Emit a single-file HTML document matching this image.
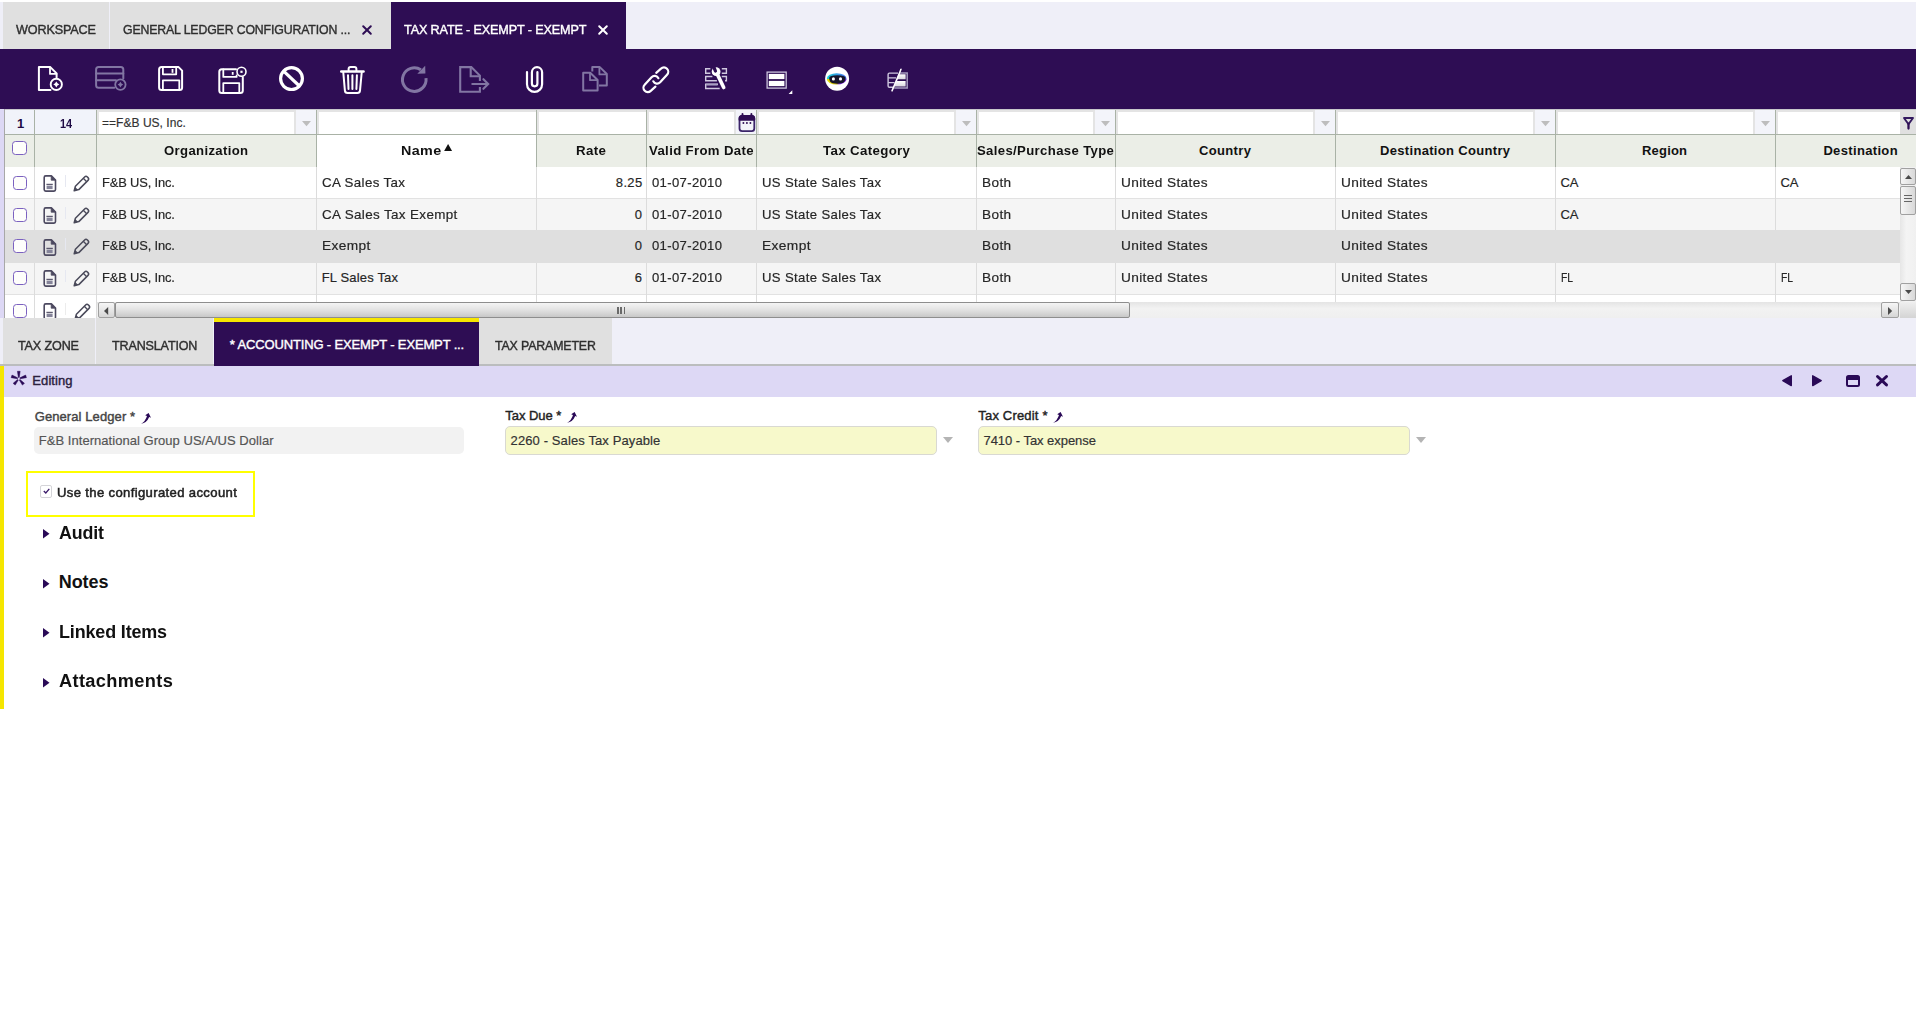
<!DOCTYPE html>
<html><head><meta charset="utf-8"><title>Tax Rate - Exempt - Exempt</title>
<style>
html,body{margin:0;padding:0;background:#fff;}
body{width:1919px;height:1027px;position:relative;overflow:hidden;font-family:"Liberation Sans",sans-serif;}
.r{position:absolute;box-sizing:border-box;}
.t{position:absolute;white-space:pre;line-height:1;transform-origin:0 50%;}
svg{position:absolute;overflow:visible;}
</style></head><body>
<div class="r" style="left:0px;top:2px;width:1916px;height:47px;background:#efeff8;"></div>
<div class="r" style="left:3px;top:2px;width:106px;height:47px;background:#e0e0e0;"></div>
<div class="r" style="left:110px;top:2px;width:281px;height:47px;background:#e0e0e0;"></div>
<div class="r" style="left:391px;top:2px;width:235px;height:48px;background:#2e0d54;"></div>
<span class="t" style="left:16.00px;top:23.00px;font-size:13px;-webkit-text-stroke:0.40px #2f2f2f;color:#2f2f2f;letter-spacing:-0.150px;transform:scaleX(0.9715);">WORKSPACE</span>
<span class="t" style="left:123.40px;top:23.00px;font-size:13px;-webkit-text-stroke:0.40px #2f2f2f;color:#2f2f2f;letter-spacing:-0.150px;transform:scaleX(0.9466);">GENERAL LEDGER CONFIGURATION ...</span>
<span class="t" style="left:404.20px;top:23.00px;font-size:13px;-webkit-text-stroke:0.40px #ffffff;color:#ffffff;letter-spacing:-0.150px;transform:scaleX(0.9719);">TAX RATE - EXEMPT - EXEMPT</span>
<svg style="left:362.3px;top:24.7px" width="10" height="10" viewBox="0 0 10 10"><path d="M1.2 1.2 L8.8 8.8 M8.8 1.2 L1.2 8.8" stroke="#2e0d54" stroke-width="2" stroke-linecap="round" fill="none"/></svg>
<svg style="left:598.2px;top:24.7px" width="10" height="10" viewBox="0 0 10 10"><path d="M1.2 1.2 L8.8 8.8 M8.8 1.2 L1.2 8.8" stroke="#ffffff" stroke-width="2" stroke-linecap="round" fill="none"/></svg>
<div class="r" style="left:0px;top:49px;width:1916px;height:60px;background:#2e0d54;"></div>
<div class="r" style="left:0px;top:109px;width:1916px;height:1px;background:#c8c8cc;"></div>
<svg style="left:0;top:48px" width="1916" height="61" viewBox="0 48 1916 61"><g stroke="#ffffff" stroke-width="2" fill="none" stroke-linejoin="round" stroke-linecap="round"><path d="M50.5 90.1H38.9V67.1H50.3L56.6 73.4V77.6"/><path d="M50 67.3V73.9H56.4" stroke-width="1.8"/><circle cx="56.3" cy="84.4" r="5.6" stroke-width="1.9"/></g><path d="M56.3 81.4L57.5 83.2L59.3 84.4L57.5 85.6L56.3 87.4L55.1 85.6L53.3 84.4L55.1 83.2Z" fill="#ffffff"/><g stroke="#8276a3" stroke-width="2" fill="none" stroke-linejoin="round" stroke-linecap="round"><path d="M114.2 87.7H98.6Q96.1 87.7 96.1 85.2V69.6Q96.1 67.1 98.6 67.1H120.8Q123.3 67.1 123.3 69.6V78.6"/><path d="M96.1 73.6H123.3M96.1 80.2H116"/><circle cx="120.4" cy="84.6" r="5.2" stroke-width="1.8"/></g><path d="M120.4 81.8L121.5 83.5L123.2 84.6L121.5 85.7L120.4 87.4L119.3 85.7L117.6 84.6L119.3 83.5Z" fill="#8276a3"/><g stroke="#ffffff" stroke-width="2" fill="none" stroke-linejoin="round" stroke-linecap="round"><path d="M161.6 67.1H178.6L182.1 70.6V87.6Q182.1 90.1 179.6 90.1H161.6Q159.1 90.1 159.1 87.6V69.6Q159.1 67.1 161.6 67.1Z"/><path d="M162.9 67.3V74.3H176.2V67.3" stroke-width="1.8"/><path d="M162.9 90V80.3H179.3V90" stroke-width="1.8"/></g><rect x="171.6" y="69" width="1.8" height="3.8" fill="#ffffff"/><g stroke="#ffffff" stroke-width="2" fill="none" stroke-linejoin="round" stroke-linecap="round"><path d="M236 69.2H221.8Q219.3 69.2 219.3 71.7V90.5Q219.3 93 221.8 93H240.3Q242.8 93 242.8 90.5V77.2"/><path d="M223.3 69.4V76.9H236.6V75.5" stroke-width="1.8"/><path d="M223.3 92.8V83.1H239.3V92.8" stroke-width="1.8"/><circle cx="241.5" cy="71.8" r="4.5" stroke-width="1.6"/></g><rect x="231.8" y="72" width="1.8" height="2.8" fill="#ffffff"/><rect x="240.4" y="70.7" width="2.2" height="2.2" fill="#ffffff"/><g stroke="#ffffff" stroke-width="3.2" fill="none"><circle cx="291.5" cy="78.6" r="10.9"/><path d="M283.6 71.2L299.4 86"/></g><g stroke="#ffffff" fill="none" stroke-linejoin="round" stroke-linecap="round"><path d="M341.2 71.5H363.6" stroke-width="2.4"/><path d="M348.6 70.6V69.1Q348.6 67.1 350.6 67.1H354.4Q356.4 67.1 356.4 69.1V70.6" stroke-width="2"/><path d="M343.3 72.5L344.9 90.6Q345.1 93 347.5 93H357.4Q359.8 93 360 90.6L361.7 72.5" stroke-width="2"/><path d="M348 75.3L348.5 89M352.4 75.3V89M356.9 75.3L356.4 89" stroke-width="2"/></g><g stroke="#8276a3" stroke-width="3" fill="none"><path d="M420.9 69.8A11.8 11.8 0 1 0 426 78.2"/></g><path d="M425.2 65.8L425.4 73.6L417.3 73.8Z" fill="#8276a3"/><g stroke="#8276a3" stroke-width="2.1" fill="none" stroke-linejoin="miter"><path d="M479.9 81V75.6L471.3 67.1H460.2V91.8H479.9V87"/><path d="M470.7 67.3V76.2H479.7"/><path d="M472.3 84H487.6M483.4 79.2L488.2 84L483.4 88.8" stroke-linecap="round"/></g><path d="M527 72V84.3A7.55 7.55 0 0 0 542.1 84.3V72.3A5.1 5.1 0 0 0 531.9 72.3V83.6A2.75 2.75 0 0 0 537.4 83.6V72.2" stroke="#ffffff" stroke-width="2.2" fill="none" stroke-linecap="round"/><g stroke="#8276a3" stroke-width="2" fill="none" stroke-linejoin="round"><path d="M592.3 71.6V67.1H599.8L606.8 74V85.4H599"/><path d="M599.4 67.3V74.4H606.6" stroke-width="1.8"/><path d="M583.2 72.8H590.2L597.6 80V90.6H583.2Z"/><path d="M590 73V80.2H597.4" stroke-width="1.8"/></g><g stroke="#ffffff" stroke-width="2.2" fill="none" stroke-linecap="round" stroke-linejoin="round"><path d="M656.25 72.85L660.96 68.66A4.3 4.3 0 0 1 667.04 74.74L660.14 82.34A4.3 4.3 0 0 1 653.3 81.3"/><path d="M656.25 72.85L660.96 68.66A4.3 4.3 0 0 1 667.04 74.74L660.14 82.34A4.3 4.3 0 0 1 653.3 81.3" transform="rotate(180 655.85 79.75)"/></g><g stroke="#cfc8df" stroke-width="1.4" fill="none"><path d="M710.4 68.8H705.7V73.2H710.4M721.8 68.8H726.4V73.2H721.8"/><path d="M712.4 76.5H705.7V80.8H716.9M721.8 76.5H726.4V80.8H725"/><path d="M718 84.3H705.7V88.5H719.7"/><path d="M706 84.6H717.6" stroke-width="1.9" stroke="#a89fc2"/></g><path d="M717.4 74.4L723.7 87.5" stroke="#ffffff" stroke-width="3.6" stroke-linecap="round"/><circle cx="716.1" cy="71.7" r="4.4" fill="#ffffff"/><path d="M715.4 71L713.2 65.4" stroke="#2e0d54" stroke-width="3.3" stroke-linecap="round"/><rect x="767.1" y="72.1" width="19.1" height="16" fill="none" stroke="#cbc3dc" stroke-width="1.3"/><rect x="768.8" y="73.9" width="15.6" height="5.2" fill="#ffffff"/><rect x="768.8" y="80.9" width="15.6" height="5.2" fill="#ffffff"/><path d="M788.6 94H792.3V90.3Z" fill="#ffffff"/><defs><linearGradient id="rg1" x1="0" y1="0" x2="1" y2="0"><stop offset="0" stop-color="#19d3d6"/><stop offset="1" stop-color="#4b6ff0"/></linearGradient><linearGradient id="rg2" x1="0" y1="0" x2="1" y2="0"><stop offset="0" stop-color="#e9e100"/><stop offset="0.5" stop-color="#c8b400"/><stop offset="0.62" stop-color="#7a22d8"/><stop offset="1" stop-color="#7a22d8"/></linearGradient><filter id="rbl" x="-20%" y="-20%" width="140%" height="140%"><feGaussianBlur stdDeviation="0.45"/></filter><clipPath id="rtop"><rect x="825" y="66" width="24" height="12.9"/></clipPath><clipPath id="rbot"><rect x="825" y="78.9" width="24" height="13"/></clipPath></defs><circle cx="837.1" cy="78.8" r="12" fill="#ffffff"/><g filter="url(#rbl)"><ellipse cx="836.7" cy="78.9" rx="9.9" ry="5.7" fill="url(#rg1)" clip-path="url(#rtop)"/><ellipse cx="836.7" cy="78.9" rx="9.9" ry="5.7" fill="url(#rg2)" clip-path="url(#rbot)"/></g><path d="M829.2 77.8Q829.4 75.2 837.3 75.2Q845.3 75.2 845.5 77.8Q845.7 82 841.6 83.3Q837.4 84.2 833 83.3Q829 82 829.2 77.8Z" fill="#17162a"/><circle cx="833.4" cy="78.9" r="1.55" fill="#ffffff"/><circle cx="840.5" cy="78.9" r="1.55" fill="#ffffff"/><defs><linearGradient id="gg" x1="0" y1="0" x2="0" y2="1"><stop offset="0" stop-color="#ffffff"/><stop offset="1" stop-color="#d8d6de"/></linearGradient></defs><path d="M898 73.1H889.4Q888.1 73.1 888.1 74.4V86Q888.1 87.3 889.4 87.3H893.5" stroke="#cfc8df" stroke-width="1.4" fill="none"/><path d="M888.1 77.9H896M888.1 82.6H894.5" stroke="#cfc8df" stroke-width="1.4"/><path d="M899.8 73.1H907.2V88H894.2" stroke="#a59bbf" stroke-width="1.5" fill="none"/><path d="M899 74.2H905.6V79.3H897Z" fill="url(#gg)"/><path d="M896.6 81H905.6V86.6H894.2Z" fill="url(#gg)"/><path d="M901 69.2L892 90.9L896.5 80.5Z" stroke="#ffffff" stroke-width="1.5" fill="#ffffff" stroke-linejoin="round"/></svg>
<div class="r" style="left:0px;top:109px;width:4px;height:209px;background:#ddd8f5;"></div>
<div class="r" style="left:4px;top:109px;width:1px;height:209px;background:#a8a8a8;"></div>
<div class="r" style="left:5px;top:110px;width:1911px;height:208px;background:#ffffff;"></div>
<div class="r" style="left:5px;top:110px;width:1911px;height:24px;background:#f1f3fa;"></div>
<div class="r" style="left:5px;top:134px;width:1911px;height:1px;background:#a9b2a6;"></div>
<div class="r" style="left:5px;top:135px;width:1911px;height:32px;background:#ebeee7;"></div>
<div class="r" style="left:317px;top:135px;width:219px;height:32px;background:#ffffff;"></div>
<div class="r" style="left:5px;top:167px;width:1895px;height:31px;background:#ffffff;"></div>
<div class="r" style="left:5px;top:198px;width:1895px;height:1px;background:#e2e2e2;"></div>
<div class="r" style="left:5px;top:199px;width:1895px;height:31px;background:#f5f5f5;"></div>
<div class="r" style="left:5px;top:230px;width:1895px;height:1px;background:#e2e2e2;"></div>
<div class="r" style="left:5px;top:231px;width:1895px;height:31px;background:#dfdfdf;"></div>
<div class="r" style="left:5px;top:262px;width:1895px;height:1px;background:#e2e2e2;"></div>
<div class="r" style="left:5px;top:263px;width:1895px;height:31px;background:#f5f5f5;"></div>
<div class="r" style="left:5px;top:294px;width:1895px;height:1px;background:#e2e2e2;"></div>
<div class="r" style="left:5px;top:295px;width:1895px;height:23px;background:#ffffff;"></div>
<div class="r" style="left:34px;top:110px;width:1px;height:57px;background:#a9b2a6;"></div>
<div class="r" style="left:34px;top:167px;width:1px;height:151px;background:#dcdcdc;"></div>
<div class="r" style="left:96px;top:110px;width:1px;height:57px;background:#a9b2a6;"></div>
<div class="r" style="left:96px;top:167px;width:1px;height:151px;background:#dcdcdc;"></div>
<div class="r" style="left:316px;top:110px;width:1px;height:57px;background:#a9b2a6;"></div>
<div class="r" style="left:316px;top:167px;width:1px;height:151px;background:#dcdcdc;"></div>
<div class="r" style="left:536px;top:110px;width:1px;height:57px;background:#a9b2a6;"></div>
<div class="r" style="left:536px;top:167px;width:1px;height:151px;background:#dcdcdc;"></div>
<div class="r" style="left:646px;top:110px;width:1px;height:57px;background:#a9b2a6;"></div>
<div class="r" style="left:646px;top:167px;width:1px;height:151px;background:#dcdcdc;"></div>
<div class="r" style="left:756px;top:110px;width:1px;height:57px;background:#a9b2a6;"></div>
<div class="r" style="left:756px;top:167px;width:1px;height:151px;background:#dcdcdc;"></div>
<div class="r" style="left:976px;top:110px;width:1px;height:57px;background:#a9b2a6;"></div>
<div class="r" style="left:976px;top:167px;width:1px;height:151px;background:#dcdcdc;"></div>
<div class="r" style="left:1115px;top:110px;width:1px;height:57px;background:#a9b2a6;"></div>
<div class="r" style="left:1115px;top:167px;width:1px;height:151px;background:#dcdcdc;"></div>
<div class="r" style="left:1335px;top:110px;width:1px;height:57px;background:#a9b2a6;"></div>
<div class="r" style="left:1335px;top:167px;width:1px;height:151px;background:#dcdcdc;"></div>
<div class="r" style="left:1555px;top:110px;width:1px;height:57px;background:#a9b2a6;"></div>
<div class="r" style="left:1555px;top:167px;width:1px;height:151px;background:#dcdcdc;"></div>
<div class="r" style="left:1775px;top:110px;width:1px;height:57px;background:#a9b2a6;"></div>
<div class="r" style="left:1775px;top:167px;width:1px;height:151px;background:#dcdcdc;"></div>
<div class="r" style="left:5px;top:230px;width:1895px;height:33px;background:#dfdfdf;"></div>
<div class="r" style="left:97px;top:110px;width:219px;height:24px;background:#e4e4e4;"></div>
<div class="r" style="left:99px;top:112px;width:195px;height:22px;background:#ffffff;"></div>
<div class="r" style="left:296px;top:110px;width:20px;height:24px;background:#f3f4fa;"></div>
<svg style="left:302.3px;top:120.9px" width="9" height="5.2" viewBox="0 0 9 5.2"><path d="M0 0H9L4.5 5.2Z" fill="#bdbdbd"/></svg>
<div class="r" style="left:317px;top:110px;width:219px;height:24px;background:#e4e4e4;"></div>
<div class="r" style="left:319px;top:112px;width:217px;height:22px;background:#ffffff;"></div>
<div class="r" style="left:537px;top:110px;width:109px;height:24px;background:#e4e4e4;"></div>
<div class="r" style="left:539px;top:112px;width:107px;height:22px;background:#ffffff;"></div>
<div class="r" style="left:647px;top:110px;width:109px;height:24px;background:#e4e4e4;"></div>
<div class="r" style="left:649px;top:112px;width:85px;height:22px;background:#ffffff;"></div>
<div class="r" style="left:736px;top:110px;width:20px;height:24px;background:#f3f4fa;"></div>
<div class="r" style="left:757px;top:110px;width:219px;height:24px;background:#e4e4e4;"></div>
<div class="r" style="left:759px;top:112px;width:195px;height:22px;background:#ffffff;"></div>
<div class="r" style="left:956px;top:110px;width:20px;height:24px;background:#f3f4fa;"></div>
<svg style="left:962.3px;top:120.9px" width="9" height="5.2" viewBox="0 0 9 5.2"><path d="M0 0H9L4.5 5.2Z" fill="#bdbdbd"/></svg>
<div class="r" style="left:977px;top:110px;width:138px;height:24px;background:#e4e4e4;"></div>
<div class="r" style="left:979px;top:112px;width:114px;height:22px;background:#ffffff;"></div>
<div class="r" style="left:1095px;top:110px;width:20px;height:24px;background:#f3f4fa;"></div>
<svg style="left:1101.3px;top:120.9px" width="9" height="5.2" viewBox="0 0 9 5.2"><path d="M0 0H9L4.5 5.2Z" fill="#bdbdbd"/></svg>
<div class="r" style="left:1116px;top:110px;width:219px;height:24px;background:#e4e4e4;"></div>
<div class="r" style="left:1118px;top:112px;width:195px;height:22px;background:#ffffff;"></div>
<div class="r" style="left:1315px;top:110px;width:20px;height:24px;background:#f3f4fa;"></div>
<svg style="left:1321.3px;top:120.9px" width="9" height="5.2" viewBox="0 0 9 5.2"><path d="M0 0H9L4.5 5.2Z" fill="#bdbdbd"/></svg>
<div class="r" style="left:1336px;top:110px;width:219px;height:24px;background:#e4e4e4;"></div>
<div class="r" style="left:1338px;top:112px;width:195px;height:22px;background:#ffffff;"></div>
<div class="r" style="left:1535px;top:110px;width:20px;height:24px;background:#f3f4fa;"></div>
<svg style="left:1541.3px;top:120.9px" width="9" height="5.2" viewBox="0 0 9 5.2"><path d="M0 0H9L4.5 5.2Z" fill="#bdbdbd"/></svg>
<div class="r" style="left:1556px;top:110px;width:219px;height:24px;background:#e4e4e4;"></div>
<div class="r" style="left:1558px;top:112px;width:195px;height:22px;background:#ffffff;"></div>
<div class="r" style="left:1755px;top:110px;width:20px;height:24px;background:#f3f4fa;"></div>
<svg style="left:1761.3px;top:120.9px" width="9" height="5.2" viewBox="0 0 9 5.2"><path d="M0 0H9L4.5 5.2Z" fill="#bdbdbd"/></svg>
<div class="r" style="left:1776px;top:110px;width:124px;height:24px;background:#e4e4e4;"></div>
<div class="r" style="left:1778px;top:112px;width:122px;height:22px;background:#ffffff;"></div>
<div class="r" style="left:1900px;top:110px;width:16px;height:24px;background:#e0e0e0;"></div>
<svg style="left:1900px;top:110px" width="16" height="24" viewBox="1900 110 16 24"><path d="M1904 118H1913L1908.5 124.2Z" fill="none" stroke="#33195f" stroke-width="1.9" stroke-linejoin="round"/><path d="M1908.5 124V128.6" stroke="#2e0d54" stroke-width="2.3" stroke-linecap="round"/></svg>
<svg style="left:738px;top:113px" width="18" height="20" viewBox="738 113 18 20"><rect x="739.5" y="115.9" width="14.8" height="15.3" rx="2.6" fill="none" stroke="#3b2469" stroke-width="1.8"/><path d="M739.5 119.8V118.5Q739.5 115.9 742.1 115.9H751.7Q754.3 115.9 754.3 118.5V119.8Z" fill="#2e0d54" stroke="#2e0d54" stroke-width="1.8" stroke-linejoin="round"/><path d="M742.5 113.9V116M751.4 113.9V116" stroke="#2e0d54" stroke-width="1.9" stroke-linecap="round"/><circle cx="743.4" cy="123" r="0.95" fill="#2e0d54"/><circle cx="746.9" cy="123" r="0.95" fill="#2e0d54"/><circle cx="750.4" cy="123" r="0.95" fill="#2e0d54"/></svg>
<span class="t" style="left:17.00px;top:117.00px;font-size:13px;font-weight:bold;color:#1f0b45;letter-spacing:0.000px;">1</span>
<span class="t" style="left:60.40px;top:117.00px;font-size:13px;font-weight:bold;color:#1f0b45;letter-spacing:-0.150px;transform:scaleX(0.8386);">14</span>
<span class="t" style="left:102.00px;top:116.84px;font-size:12px;-webkit-text-stroke:0.18px #333;color:#333;letter-spacing:0.033px;">==F&amp;B US, Inc.</span>
<span class="t" style="left:164.20px;top:144.00px;font-size:13px;font-weight:bold;color:#111;letter-spacing:0.350px;transform:scaleX(1.0096);">Organization</span>
<span class="t" style="left:400.80px;top:144.00px;font-size:13px;font-weight:bold;color:#111;letter-spacing:0.350px;transform:scaleX(1.1027);">Name</span>
<svg style="left:443.8px;top:144.2px" width="8.2" height="7" viewBox="0 0 8 7"><path d="M4 0L8 7H0Z" fill="#111"/></svg>
<span class="t" style="left:576.30px;top:144.00px;font-size:13px;font-weight:bold;color:#111;letter-spacing:0.350px;transform:scaleX(1.0230);">Rate</span>
<span class="t" style="left:649.20px;top:144.00px;font-size:13px;font-weight:bold;color:#111;letter-spacing:0.350px;transform:scaleX(1.0141);">Valid From Date</span>
<span class="t" style="left:823.00px;top:144.00px;font-size:13px;font-weight:bold;color:#111;letter-spacing:0.350px;transform:scaleX(1.0206);">Tax Category</span>
<span class="t" style="left:977.30px;top:144.00px;font-size:13px;font-weight:bold;color:#111;letter-spacing:0.350px;transform:scaleX(1.0110);">Sales/Purchase Type</span>
<span class="t" style="left:1199.00px;top:144.00px;font-size:13px;font-weight:bold;color:#111;letter-spacing:0.350px;">Country</span>
<span class="t" style="left:1380.00px;top:144.00px;font-size:13px;font-weight:bold;color:#111;letter-spacing:0.321px;">Destination Country</span>
<span class="t" style="left:1642.00px;top:144.00px;font-size:13px;font-weight:bold;color:#111;letter-spacing:0.189px;">Region</span>
<span class="t" style="left:1823.40px;top:144.00px;font-size:13px;font-weight:bold;color:#111;letter-spacing:0.342px;">Destination</span>
<div class="r" style="left:12px;top:141px;width:15px;height:14px;background:#fefefb;border:1.3px solid #7b61c0;border-radius:3.5px"></div>
<div class="r" style="left:13px;top:176px;width:14px;height:14px;background:#fefefb;border:1.3px solid #7b61c0;border-radius:3.5px"></div>
<svg style="left:43px;top:175.4px" width="14" height="17" viewBox="0 0 14 17"><path d="M2.7 0.9H8.4L12.5 5V14.6Q12.5 16.1 11 16.1H2.7Q1.2 16.1 1.2 14.6V2.4Q1.2 0.9 2.7 0.9Z" fill="none" stroke="#4c4960" stroke-width="1.6" stroke-linejoin="round"/><path d="M8.2 1V5.2H12.4Z" fill="#4c4960" stroke="#4c4960" stroke-width="0.8"/><rect x="3.4" y="8.8" width="6.4" height="1.1" fill="#4c4960"/><rect x="3.6" y="10.6" width="6" height="3.5" fill="#85849a"/></svg>
<div class="r" style="left:65px;top:175px;width:1px;height:12px;background:#e6e8f1;"></div>
<svg style="left:73.2px;top:175.2px" width="17" height="17" viewBox="0 0 17 17"><path d="M1.2 15.8L2.4 11.2L11.6 2Q13 0.6 14.4 2L15 2.6Q16.4 4 15 5.4L5.8 14.6Z" fill="none" stroke="#4a4a5a" stroke-width="1.5" stroke-linejoin="round"/><path d="M10.3 3.3L13.7 6.7" stroke="#4a4a5a" stroke-width="1.3"/><path d="M1.2 15.8L2.2 12L5 14.8Z" fill="#4a4a5a"/></svg>
<span class="t" style="left:101.60px;top:175.90px;font-size:13px;-webkit-text-stroke:0.18px #262626;color:#262626;letter-spacing:-0.150px;transform:scaleX(0.9921);">F&amp;B US, Inc.</span>
<span class="t" style="left:321.70px;top:175.90px;font-size:13px;-webkit-text-stroke:0.18px #262626;color:#262626;letter-spacing:0.350px;transform:scaleX(1.0256);">CA Sales Tax</span>
<span class="t" style="left:615.80px;top:175.90px;font-size:13px;-webkit-text-stroke:0.18px #262626;color:#262626;letter-spacing:0.350px;">8.25</span>
<span class="t" style="left:651.70px;top:175.90px;font-size:13px;-webkit-text-stroke:0.18px #262626;color:#262626;letter-spacing:0.350px;transform:scaleX(1.0050);">01-07-2010</span>
<span class="t" style="left:761.50px;top:175.90px;font-size:13px;-webkit-text-stroke:0.18px #262626;color:#262626;letter-spacing:0.350px;transform:scaleX(1.0109);">US State Sales Tax</span>
<span class="t" style="left:981.70px;top:175.90px;font-size:13px;-webkit-text-stroke:0.18px #262626;color:#262626;letter-spacing:0.350px;transform:scaleX(1.0470);">Both</span>
<span class="t" style="left:1120.50px;top:175.90px;font-size:13px;-webkit-text-stroke:0.18px #262626;color:#262626;letter-spacing:0.350px;transform:scaleX(1.0517);">United States</span>
<span class="t" style="left:1340.50px;top:175.90px;font-size:13px;-webkit-text-stroke:0.18px #262626;color:#262626;letter-spacing:0.350px;transform:scaleX(1.0517);">United States</span>
<span class="t" style="left:1560.50px;top:175.90px;font-size:13px;-webkit-text-stroke:0.18px #262626;color:#262626;letter-spacing:-0.059px;">CA</span>
<span class="t" style="left:1780.50px;top:175.90px;font-size:13px;-webkit-text-stroke:0.18px #262626;color:#262626;letter-spacing:-0.059px;">CA</span>
<div class="r" style="left:13px;top:207.7px;width:14px;height:14px;background:#fefefb;border:1.3px solid #7b61c0;border-radius:3.5px"></div>
<svg style="left:43px;top:207.1px" width="14" height="17" viewBox="0 0 14 17"><path d="M2.7 0.9H8.4L12.5 5V14.6Q12.5 16.1 11 16.1H2.7Q1.2 16.1 1.2 14.6V2.4Q1.2 0.9 2.7 0.9Z" fill="none" stroke="#4c4960" stroke-width="1.6" stroke-linejoin="round"/><path d="M8.2 1V5.2H12.4Z" fill="#4c4960" stroke="#4c4960" stroke-width="0.8"/><rect x="3.4" y="8.8" width="6.4" height="1.1" fill="#4c4960"/><rect x="3.6" y="10.6" width="6" height="3.5" fill="#85849a"/></svg>
<div class="r" style="left:65px;top:206.7px;width:1px;height:12px;background:#e6e8f1;"></div>
<svg style="left:73.2px;top:206.89999999999998px" width="17" height="17" viewBox="0 0 17 17"><path d="M1.2 15.8L2.4 11.2L11.6 2Q13 0.6 14.4 2L15 2.6Q16.4 4 15 5.4L5.8 14.6Z" fill="none" stroke="#4a4a5a" stroke-width="1.5" stroke-linejoin="round"/><path d="M10.3 3.3L13.7 6.7" stroke="#4a4a5a" stroke-width="1.3"/><path d="M1.2 15.8L2.2 12L5 14.8Z" fill="#4a4a5a"/></svg>
<span class="t" style="left:101.60px;top:207.60px;font-size:13px;-webkit-text-stroke:0.18px #262626;color:#262626;letter-spacing:-0.150px;transform:scaleX(0.9921);">F&amp;B US, Inc.</span>
<span class="t" style="left:321.70px;top:207.60px;font-size:13px;-webkit-text-stroke:0.18px #262626;color:#262626;letter-spacing:0.350px;transform:scaleX(1.0323);">CA Sales Tax Exempt</span>
<span class="t" style="left:634.80px;top:207.60px;font-size:13px;-webkit-text-stroke:0.18px #262626;color:#262626;letter-spacing:0.000px;">0</span>
<span class="t" style="left:651.70px;top:207.60px;font-size:13px;-webkit-text-stroke:0.18px #262626;color:#262626;letter-spacing:0.350px;transform:scaleX(1.0050);">01-07-2010</span>
<span class="t" style="left:761.50px;top:207.60px;font-size:13px;-webkit-text-stroke:0.18px #262626;color:#262626;letter-spacing:0.350px;transform:scaleX(1.0109);">US State Sales Tax</span>
<span class="t" style="left:981.70px;top:207.60px;font-size:13px;-webkit-text-stroke:0.18px #262626;color:#262626;letter-spacing:0.350px;transform:scaleX(1.0470);">Both</span>
<span class="t" style="left:1120.50px;top:207.60px;font-size:13px;-webkit-text-stroke:0.18px #262626;color:#262626;letter-spacing:0.350px;transform:scaleX(1.0517);">United States</span>
<span class="t" style="left:1340.50px;top:207.60px;font-size:13px;-webkit-text-stroke:0.18px #262626;color:#262626;letter-spacing:0.350px;transform:scaleX(1.0517);">United States</span>
<span class="t" style="left:1560.50px;top:207.60px;font-size:13px;-webkit-text-stroke:0.18px #262626;color:#262626;letter-spacing:-0.059px;">CA</span>
<div class="r" style="left:13px;top:239.2px;width:14px;height:14px;background:#fefefb;border:1.3px solid #7b61c0;border-radius:3.5px"></div>
<svg style="left:43px;top:238.6px" width="14" height="17" viewBox="0 0 14 17"><path d="M2.7 0.9H8.4L12.5 5V14.6Q12.5 16.1 11 16.1H2.7Q1.2 16.1 1.2 14.6V2.4Q1.2 0.9 2.7 0.9Z" fill="none" stroke="#4c4960" stroke-width="1.6" stroke-linejoin="round"/><path d="M8.2 1V5.2H12.4Z" fill="#4c4960" stroke="#4c4960" stroke-width="0.8"/><rect x="3.4" y="8.8" width="6.4" height="1.1" fill="#4c4960"/><rect x="3.6" y="10.6" width="6" height="3.5" fill="#85849a"/></svg>
<div class="r" style="left:65px;top:238.2px;width:1px;height:12px;background:#e6e8f1;"></div>
<svg style="left:73.2px;top:238.39999999999998px" width="17" height="17" viewBox="0 0 17 17"><path d="M1.2 15.8L2.4 11.2L11.6 2Q13 0.6 14.4 2L15 2.6Q16.4 4 15 5.4L5.8 14.6Z" fill="none" stroke="#4a4a5a" stroke-width="1.5" stroke-linejoin="round"/><path d="M10.3 3.3L13.7 6.7" stroke="#4a4a5a" stroke-width="1.3"/><path d="M1.2 15.8L2.2 12L5 14.8Z" fill="#4a4a5a"/></svg>
<span class="t" style="left:101.60px;top:239.00px;font-size:13px;-webkit-text-stroke:0.18px #262626;color:#262626;letter-spacing:-0.150px;transform:scaleX(0.9921);">F&amp;B US, Inc.</span>
<span class="t" style="left:321.70px;top:239.00px;font-size:13px;-webkit-text-stroke:0.18px #262626;color:#262626;letter-spacing:0.350px;transform:scaleX(1.0541);">Exempt</span>
<span class="t" style="left:634.80px;top:239.00px;font-size:13px;-webkit-text-stroke:0.18px #262626;color:#262626;letter-spacing:0.000px;">0</span>
<span class="t" style="left:651.70px;top:239.00px;font-size:13px;-webkit-text-stroke:0.18px #262626;color:#262626;letter-spacing:0.350px;transform:scaleX(1.0050);">01-07-2010</span>
<span class="t" style="left:761.50px;top:239.00px;font-size:13px;-webkit-text-stroke:0.18px #262626;color:#262626;letter-spacing:0.350px;transform:scaleX(1.0584);">Exempt</span>
<span class="t" style="left:981.70px;top:239.00px;font-size:13px;-webkit-text-stroke:0.18px #262626;color:#262626;letter-spacing:0.350px;transform:scaleX(1.0470);">Both</span>
<span class="t" style="left:1120.50px;top:239.00px;font-size:13px;-webkit-text-stroke:0.18px #262626;color:#262626;letter-spacing:0.350px;transform:scaleX(1.0517);">United States</span>
<span class="t" style="left:1340.50px;top:239.00px;font-size:13px;-webkit-text-stroke:0.18px #262626;color:#262626;letter-spacing:0.350px;transform:scaleX(1.0517);">United States</span>
<div class="r" style="left:13px;top:271px;width:14px;height:14px;background:#fefefb;border:1.3px solid #7b61c0;border-radius:3.5px"></div>
<svg style="left:43px;top:270.4px" width="14" height="17" viewBox="0 0 14 17"><path d="M2.7 0.9H8.4L12.5 5V14.6Q12.5 16.1 11 16.1H2.7Q1.2 16.1 1.2 14.6V2.4Q1.2 0.9 2.7 0.9Z" fill="none" stroke="#4c4960" stroke-width="1.6" stroke-linejoin="round"/><path d="M8.2 1V5.2H12.4Z" fill="#4c4960" stroke="#4c4960" stroke-width="0.8"/><rect x="3.4" y="8.8" width="6.4" height="1.1" fill="#4c4960"/><rect x="3.6" y="10.6" width="6" height="3.5" fill="#85849a"/></svg>
<div class="r" style="left:65px;top:270px;width:1px;height:12px;background:#e6e8f1;"></div>
<svg style="left:73.2px;top:270.2px" width="17" height="17" viewBox="0 0 17 17"><path d="M1.2 15.8L2.4 11.2L11.6 2Q13 0.6 14.4 2L15 2.6Q16.4 4 15 5.4L5.8 14.6Z" fill="none" stroke="#4a4a5a" stroke-width="1.5" stroke-linejoin="round"/><path d="M10.3 3.3L13.7 6.7" stroke="#4a4a5a" stroke-width="1.3"/><path d="M1.2 15.8L2.2 12L5 14.8Z" fill="#4a4a5a"/></svg>
<span class="t" style="left:101.60px;top:270.80px;font-size:13px;-webkit-text-stroke:0.18px #262626;color:#262626;letter-spacing:-0.150px;transform:scaleX(0.9921);">F&amp;B US, Inc.</span>
<span class="t" style="left:321.70px;top:270.80px;font-size:13px;-webkit-text-stroke:0.18px #262626;color:#262626;letter-spacing:0.170px;">FL Sales Tax</span>
<span class="t" style="left:634.80px;top:270.80px;font-size:13px;-webkit-text-stroke:0.18px #262626;color:#262626;letter-spacing:0.000px;">6</span>
<span class="t" style="left:651.70px;top:270.80px;font-size:13px;-webkit-text-stroke:0.18px #262626;color:#262626;letter-spacing:0.350px;transform:scaleX(1.0050);">01-07-2010</span>
<span class="t" style="left:761.50px;top:270.80px;font-size:13px;-webkit-text-stroke:0.18px #262626;color:#262626;letter-spacing:0.350px;transform:scaleX(1.0109);">US State Sales Tax</span>
<span class="t" style="left:981.70px;top:270.80px;font-size:13px;-webkit-text-stroke:0.18px #262626;color:#262626;letter-spacing:0.350px;transform:scaleX(1.0470);">Both</span>
<span class="t" style="left:1120.50px;top:270.80px;font-size:13px;-webkit-text-stroke:0.18px #262626;color:#262626;letter-spacing:0.350px;transform:scaleX(1.0517);">United States</span>
<span class="t" style="left:1340.50px;top:270.80px;font-size:13px;-webkit-text-stroke:0.18px #262626;color:#262626;letter-spacing:0.350px;transform:scaleX(1.0517);">United States</span>
<span class="t" style="left:1560.50px;top:270.80px;font-size:13px;-webkit-text-stroke:0.18px #262626;color:#262626;letter-spacing:-0.150px;transform:scaleX(0.8000);">FL</span>
<span class="t" style="left:1780.50px;top:270.80px;font-size:13px;-webkit-text-stroke:0.18px #262626;color:#262626;letter-spacing:-0.150px;transform:scaleX(0.8000);">FL</span>
<div class="r" style="left:13px;top:304px;width:14px;height:14px;background:#fefefb;border:1.3px solid #7b61c0;border-radius:3.5px"></div>
<svg style="left:43px;top:303.4px" width="14" height="17" viewBox="0 0 14 17"><path d="M2.7 0.9H8.4L12.5 5V14.6Q12.5 16.1 11 16.1H2.7Q1.2 16.1 1.2 14.6V2.4Q1.2 0.9 2.7 0.9Z" fill="none" stroke="#4c4960" stroke-width="1.6" stroke-linejoin="round"/><path d="M8.2 1V5.2H12.4Z" fill="#4c4960" stroke="#4c4960" stroke-width="0.8"/><rect x="3.4" y="8.8" width="6.4" height="1.1" fill="#4c4960"/><rect x="3.6" y="10.6" width="6" height="3.5" fill="#85849a"/></svg>
<div class="r" style="left:65px;top:303px;width:1px;height:12px;background:#ececec;"></div>
<svg style="left:73.5px;top:303.4px" width="17" height="17" viewBox="0 0 17 17"><path d="M1.2 15.8L2.4 11.2L11.6 2Q13 0.6 14.4 2L15 2.6Q16.4 4 15 5.4L5.8 14.6Z" fill="none" stroke="#4a4a5a" stroke-width="1.5" stroke-linejoin="round"/><path d="M10.3 3.3L13.7 6.7" stroke="#4a4a5a" stroke-width="1.3"/><path d="M1.2 15.8L2.2 12L5 14.8Z" fill="#4a4a5a"/></svg>
<div class="r" style="left:1900px;top:167px;width:16px;height:135px;background:#efefef;background:linear-gradient(90deg,#e6e6e6,#f4f4f4 40%,#f0f0f0)"></div>
<div class="r" style="left:1900px;top:168px;width:16px;height:17px;background:#e8e8e8;background:linear-gradient(90deg,#f6f6f6,#d8d8d8);border:1px solid #a0a0a0;border-radius:2px"></div>
<div class="r" style="left:1900px;top:186px;width:16px;height:29px;background:#e8e8e8;background:linear-gradient(90deg,#f6f6f6,#d8d8d8);border:1px solid #a0a0a0;border-radius:2px"></div>
<div class="r" style="left:1900px;top:283px;width:16px;height:18px;background:#e8e8e8;background:linear-gradient(90deg,#f6f6f6,#d8d8d8);border:1px solid #a0a0a0;border-radius:2px"></div>
<svg style="left:1904.5px;top:174.6px" width="7" height="4" viewBox="0 0 7 4"><path d="M0 4L3.5 0L7 4Z" fill="#4a4a4a"/></svg>
<svg style="left:1904.5px;top:290.4px" width="7" height="4" viewBox="0 0 7 4"><path d="M0 0L3.5 4L7 0Z" fill="#4a4a4a"/></svg>
<div class="r" style="left:1904px;top:195px;width:8px;height:1px;background:#666;"></div>
<div class="r" style="left:1904px;top:198px;width:8px;height:1px;background:#666;"></div>
<div class="r" style="left:1904px;top:201px;width:8px;height:1px;background:#666;"></div>
<div class="r" style="left:97px;top:302px;width:1803px;height:16px;background:#eeefee;background:linear-gradient(180deg,#e4e4e4,#f2f2f2 40%,#efefef)"></div>
<div class="r" style="left:1900px;top:302px;width:16px;height:16px;background:#dcdcdc;background:linear-gradient(180deg,#efefef,#d4d4d4)"></div>
<div class="r" style="left:98px;top:302px;width:17px;height:16px;background:#e8e8e8;background:linear-gradient(180deg,#f6f6f6,#d6d6d6);border:1px solid #a0a0a0;border-radius:2px"></div>
<div class="r" style="left:115px;top:302px;width:1015px;height:16px;background:#e8e8e8;background:linear-gradient(180deg,#f4f4f4,#e4e4e4 45%,#c8c8c8);border:1px solid #8e8e8e;border-radius:2px"></div>
<div class="r" style="left:1881px;top:302px;width:18px;height:16px;background:#e8e8e8;background:linear-gradient(180deg,#f6f6f6,#d6d6d6);border:1px solid #a0a0a0;border-radius:2px"></div>
<svg style="left:104.2px;top:306.6px" width="4.2" height="8" viewBox="0 0 4.2 8"><path d="M4.2 0L0 4L4.2 8Z" fill="#4a4a4a"/></svg>
<svg style="left:1888.2px;top:306.6px" width="4.2" height="8" viewBox="0 0 4.2 8"><path d="M0 0L4.2 4L0 8Z" fill="#4a4a4a"/></svg>
<div class="r" style="left:617.0px;top:306.5px;width:1.5px;height:7.5px;background:#6a6a6a;"></div>
<div class="r" style="left:620.3px;top:306.5px;width:1.5px;height:7.5px;background:#6a6a6a;"></div>
<div class="r" style="left:623.6px;top:306.5px;width:1.5px;height:7.5px;background:#6a6a6a;"></div>
<div class="r" style="left:0px;top:318px;width:1916px;height:46px;background:#efeff8;"></div>
<div class="r" style="left:3px;top:318px;width:92px;height:46px;background:#e0e0e0;"></div>
<div class="r" style="left:96px;top:318px;width:117px;height:46px;background:#e0e0e0;"></div>
<div class="r" style="left:214px;top:318px;width:265px;height:48px;background:#2e0d54;"></div>
<div class="r" style="left:214px;top:318px;width:265px;height:4px;background:#f7e600;"></div>
<div class="r" style="left:479px;top:318px;width:133px;height:46px;background:#e0e0e0;"></div>
<div class="r" style="left:0px;top:364px;width:1916px;height:2px;background:#bbbdbe;"></div>
<div class="r" style="left:214px;top:364px;width:265px;height:2px;background:#2e0d54;"></div>
<span class="t" style="left:18.40px;top:339.30px;font-size:13px;-webkit-text-stroke:0.40px #2f2f2f;color:#2f2f2f;letter-spacing:-0.150px;transform:scaleX(0.9684);">TAX ZONE</span>
<span class="t" style="left:111.90px;top:339.30px;font-size:13px;-webkit-text-stroke:0.40px #2f2f2f;color:#2f2f2f;letter-spacing:-0.150px;transform:scaleX(0.9644);">TRANSLATION</span>
<span class="t" style="left:229.80px;top:338.30px;font-size:13px;-webkit-text-stroke:0.40px #ffffff;color:#ffffff;letter-spacing:-0.150px;">* ACCOUNTING - EXEMPT - EXEMPT ...</span>
<span class="t" style="left:495.40px;top:339.30px;font-size:13px;-webkit-text-stroke:0.40px #2f2f2f;color:#2f2f2f;letter-spacing:-0.150px;transform:scaleX(0.9513);">TAX PARAMETER</span>
<div class="r" style="left:0px;top:366px;width:4px;height:343px;background:#f5e600;"></div>
<div class="r" style="left:4px;top:366px;width:1912px;height:31px;background:#ddd8f5;"></div>
<span class="t" style="left:32.30px;top:374.00px;font-size:13px;-webkit-text-stroke:0.40px #2b2140;color:#2b2140;letter-spacing:0.092px;">Editing</span>
<svg style="left:0px;top:366px" width="40" height="31" viewBox="0 366 40 31"><path d="M19.25 377.40L20.15 371.30L17.45 371.30L18.35 377.40Z" fill="#2a0a57" stroke="#2a0a57" stroke-width="0.5" stroke-linejoin="round"/><path d="M20.18 378.73L26.45 377.64L25.61 375.07L19.90 377.87Z" fill="#2a0a57" stroke="#2a0a57" stroke-width="0.5" stroke-linejoin="round"/><path d="M19.29 379.99L22.39 385.08L24.46 383.35L19.98 379.41Z" fill="#2a0a57" stroke="#2a0a57" stroke-width="0.5" stroke-linejoin="round"/><path d="M17.62 379.41L13.14 383.35L15.21 385.08L18.31 379.99Z" fill="#2a0a57" stroke="#2a0a57" stroke-width="0.5" stroke-linejoin="round"/><path d="M17.70 377.87L11.99 375.07L11.15 377.64L17.42 378.73Z" fill="#2a0a57" stroke="#2a0a57" stroke-width="0.5" stroke-linejoin="round"/></svg>
<svg style="left:1782px;top:375.4px" width="10" height="11.4" viewBox="0 0 10 11.4"><path d="M9.3 0.8V10.6L0.8 5.7Z" fill="#2a0a57" stroke="#2a0a57" stroke-width="1.4" stroke-linejoin="round"/></svg>
<svg style="left:1812px;top:375.4px" width="10" height="11.4" viewBox="0 0 10 11.4"><path d="M0.7 0.8V10.6L9.2 5.7Z" fill="#2a0a57" stroke="#2a0a57" stroke-width="1.4" stroke-linejoin="round"/></svg>
<svg style="left:1846px;top:375px" width="14" height="12" viewBox="0 0 14 12"><rect x="1" y="1" width="12" height="10" rx="1.5" fill="none" stroke="#2a0a57" stroke-width="2"/><rect x="1" y="1" width="12" height="4" fill="#2a0a57"/></svg>
<svg style="left:1876px;top:375.4px" width="12" height="11.4" viewBox="0 0 12 11.4"><path d="M1.5 1.5L10.5 9.9M10.5 1.5L1.5 9.9" stroke="#2a0a57" stroke-width="3" stroke-linecap="round"/></svg>
<span class="t" style="left:34.70px;top:409.90px;font-size:13px;-webkit-text-stroke:0.40px #444;color:#444;letter-spacing:0.093px;">General Ledger *</span>
<span class="t" style="left:505.30px;top:409.00px;font-size:13px;-webkit-text-stroke:0.40px #222;color:#222;letter-spacing:-0.045px;">Tax Due *</span>
<span class="t" style="left:978.30px;top:409.00px;font-size:13px;-webkit-text-stroke:0.40px #222;color:#222;letter-spacing:0.183px;">Tax Credit *</span>
<svg style="left:140.6px;top:413px" width="10" height="11" viewBox="0 0 10 11"><path d="M0.1 10.8Q5.8 9.8 8.2 3.9L10 4.8L7.6 0L4.2 2.2L6 2.9Q4.4 8.2 0.1 10.8Z" fill="#2a0a57"/></svg>
<svg style="left:566.9px;top:412px" width="10" height="11" viewBox="0 0 10 11"><path d="M0.1 10.8Q5.8 9.8 8.2 3.9L10 4.8L7.6 0L4.2 2.2L6 2.9Q4.4 8.2 0.1 10.8Z" fill="#2a0a57"/></svg>
<svg style="left:1052.7px;top:412px" width="10" height="11" viewBox="0 0 10 11"><path d="M0.1 10.8Q5.8 9.8 8.2 3.9L10 4.8L7.6 0L4.2 2.2L6 2.9Q4.4 8.2 0.1 10.8Z" fill="#2a0a57"/></svg>
<div class="r" style="left:34px;top:427px;width:430px;height:27px;background:#f2f2f2;border-radius:5px"></div>
<span class="t" style="left:38.80px;top:433.90px;font-size:13px;-webkit-text-stroke:0.18px #555;color:#555;letter-spacing:0.036px;">F&amp;B International Group US/A/US Dollar</span>
<div class="r" style="left:505px;top:426px;width:432px;height:29px;background:#f7f9cb;border:1px solid #d9d9d2;border-radius:5px"></div>
<div class="r" style="left:978px;top:426px;width:432px;height:29px;background:#f7f9cb;border:1px solid #d9d9d2;border-radius:5px"></div>
<span class="t" style="left:510.60px;top:434.00px;font-size:13px;-webkit-text-stroke:0.18px #333;color:#333;letter-spacing:0.109px;">2260 - Sales Tax Payable</span>
<span class="t" style="left:983.50px;top:434.00px;font-size:13px;-webkit-text-stroke:0.18px #333;color:#333;letter-spacing:-0.043px;">7410 - Tax expense</span>
<svg style="left:943px;top:437px" width="10" height="6" viewBox="0 0 10 6"><path d="M0 0H10L5 6Z" fill="#b4b4b4"/></svg>
<svg style="left:1416px;top:437px" width="10" height="6" viewBox="0 0 10 6"><path d="M0 0H10L5 6Z" fill="#b4b4b4"/></svg>
<div class="r" style="left:26px;top:471px;width:229px;height:46px;background:transparent;border:2px solid #ffff00"></div>
<div class="r" style="left:40px;top:485px;width:12px;height:12.5px;background:#fff;border:1px solid #d4d4d8;border-radius:2px"></div>
<svg style="left:42.5px;top:488px" width="7" height="6" viewBox="0 0 7 6"><path d="M0.8 3L2.8 5L6.3 0.8" stroke="#3a1a6a" stroke-width="1.3" fill="none"/></svg>
<span class="t" style="left:56.70px;top:485.90px;font-size:13px;-webkit-text-stroke:0.50px #222;color:#222;letter-spacing:0.350px;transform:scaleX(1.0070);">Use the configurated account</span>
<span class="t" style="left:58.80px;top:523.76px;font-size:18px;font-weight:bold;color:#111;letter-spacing:-0.150px;transform:scaleX(0.9915);">Audit</span>
<svg style="left:42.8px;top:529.4px" width="6.5" height="9.4" viewBox="0 0 6.5 9.4"><path d="M0 0V9.4L6.5 4.7Z" fill="#2a0a57"/></svg>
<span class="t" style="left:58.80px;top:572.86px;font-size:18px;font-weight:bold;color:#111;letter-spacing:-0.103px;">Notes</span>
<svg style="left:42.8px;top:578.5px" width="6.5" height="9.4" viewBox="0 0 6.5 9.4"><path d="M0 0V9.4L6.5 4.7Z" fill="#2a0a57"/></svg>
<span class="t" style="left:58.80px;top:622.56px;font-size:18px;font-weight:bold;color:#111;letter-spacing:-0.150px;transform:scaleX(0.9974);">Linked Items</span>
<svg style="left:42.8px;top:628.2px" width="6.5" height="9.4" viewBox="0 0 6.5 9.4"><path d="M0 0V9.4L6.5 4.7Z" fill="#2a0a57"/></svg>
<span class="t" style="left:58.80px;top:671.96px;font-size:18px;font-weight:bold;color:#111;letter-spacing:0.350px;transform:scaleX(1.0123);">Attachments</span>
<svg style="left:42.8px;top:677.6px" width="6.5" height="9.4" viewBox="0 0 6.5 9.4"><path d="M0 0V9.4L6.5 4.7Z" fill="#2a0a57"/></svg>
</body></html>
